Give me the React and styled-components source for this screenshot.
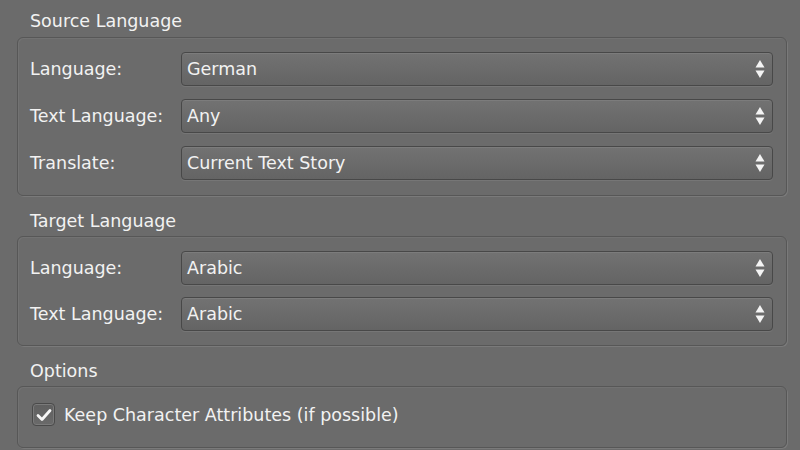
import React, { useState } from 'react';
import styled, { createGlobalStyle } from 'styled-components';

const GlobalStyle = createGlobalStyle`
  html, body {
    margin: 0;
    padding: 0;
    background: #6b6b6b;
  }
  body {
    font-family: "DejaVu Sans", Verdana, sans-serif;
  }
`;

const Panel = styled.div`
  width: 800px;
  height: 450px;
  box-sizing: border-box;
  padding: 0 13px 0 17px;
  overflow: hidden;
  color: #f2f2f2;
  font-size: 17.5px;
`;

const SectionTitle = styled.div`
  height: ${(p) => (p.$first ? 37 : 40)}px;
  display: flex;
  align-items: flex-end;
  padding-left: 13px;
  padding-bottom: ${(p) => (p.$first ? 6 : 5)}px;
  box-sizing: border-box;
`;

const Group = styled.div`
  box-sizing: border-box;
  border: 1px solid #575757;
  border-radius: 6px;
  box-shadow: inset 1px 1px 0 #727272, 1px 1px 0 #7a7a7a;
  padding: ${(p) => p.$pad || '14px 13px 15px 12px'};
  display: grid;
  grid-template-columns: 151px 1fr;
  row-gap: ${(p) => p.$gap || 13}px;
  align-items: center;
`;

const Label = styled.div``;

const SelectBox = styled.div`
  position: relative;
  height: 34px;
  box-sizing: border-box;
  border: 1px solid #484848;
  border-radius: 4px;
  background: linear-gradient(#727272, #646464);
  box-shadow: inset 0 1px 0 #7c7c7c, 0 1px 0 #767676;
  display: flex;
  align-items: center;
  padding: 0 5px;
`;

const Arrows = styled.svg`
  position: absolute;
  right: 7px;
  top: 50%;
  transform: translateY(-50%);
`;

const CheckRow = styled.label`
  grid-column: 1 / -1;
  display: flex;
  align-items: center;
  gap: 9px;
  padding-left: 2px;
  cursor: pointer;
`;

const CheckBox = styled.span`
  width: 23px;
  height: 23px;
  box-sizing: border-box;
  border: 1px solid #4a4a4a;
  border-radius: 4px;
  background: linear-gradient(#5f5f5f, #6a6a6a);
  box-shadow: inset 0 0 0 1px #7a7a7a;
  display: flex;
  align-items: center;
  justify-content: center;
`;

const Select = ({ value }) => (
  <SelectBox>
    {value}
    <Arrows width="10" height="20" viewBox="0 0 10 20">
      <path d="M5 1 L9.5 8.5 L0.5 8.5 Z" fill="#f4f4f4" />
      <path d="M5 19 L9.5 11.5 L0.5 11.5 Z" fill="#f4f4f4" />
    </Arrows>
  </SelectBox>
);

const App = () => {
  const [keep, setKeep] = useState(true);

  return (
    <>
      <GlobalStyle />
      <Panel>
        <SectionTitle $first>Source Language</SectionTitle>
        <Group>
          <Label>Language:</Label>
          <Select value="German" />
          <Label>Text Language:</Label>
          <Select value="Any" />
          <Label>Translate:</Label>
          <Select value="Current Text Story" />
        </Group>

        <SectionTitle>Target Language</SectionTitle>
        <Group $gap={12} $pad="14px 13px 14px 12px">
          <Label>Language:</Label>
          <Select value="Arabic" />
          <Label>Text Language:</Label>
          <Select value="Arabic" />
        </Group>

        <SectionTitle>Options</SectionTitle>
        <Group $pad="16px 13px 21px 12px">
          <CheckRow onClick={() => setKeep(!keep)}>
            <CheckBox>
              {keep && (
                <svg width="16" height="14" viewBox="0 0 16 14">
                  <path d="M2 7.5 L6 11.5 L14 2.5" stroke="#f6f6f6" strokeWidth="2.8" fill="none" strokeLinecap="round" strokeLinejoin="round" />
                </svg>
              )}
            </CheckBox>
            Keep Character Attributes (if possible)
          </CheckRow>
        </Group>
      </Panel>
    </>
  );
};

export default App;
